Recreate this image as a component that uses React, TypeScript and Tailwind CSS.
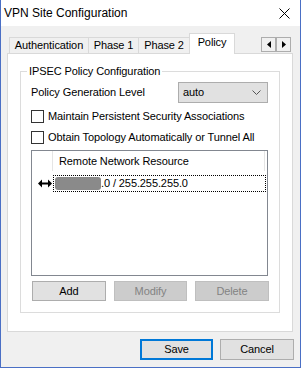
import React from 'react';

const tabs = [
  { label: 'Authentication', w: 'w-[80px]' },
  { label: 'Phase 1', w: 'w-[51px]' },
  { label: 'Phase 2', w: 'w-[52px]' },
];

const Checkbox: React.FC<{ label: string; className?: string }> = ({ label, className }) => (
  <div className={`flex items-center h-[13px] ${className ?? ''}`}>
    <div className="w-[13px] h-[13px] border border-[#333333] bg-white" />
    <span className="ml-[4px] leading-[13px]">{label}</span>
  </div>
);

const Button: React.FC<{ label: string; w: string; disabled?: boolean; focused?: boolean; h?: string }> = ({
  label,
  w,
  disabled,
  focused,
  h = 'h-[20px]',
}) => (
  <div
    className={`${w} ${h} flex items-center justify-center ${
      focused
        ? 'border-2 border-[#0078d7] bg-[#e1e1e1]'
        : disabled
        ? 'border border-[#bfbfbf] bg-[#cccccc] text-[#838383]'
        : 'border border-[#adadad] bg-[#e1e1e1]'
    }`}
  >
    {label}
  </div>
);

const App: React.FC = () => {
  return (
    <div
      className="w-[301px] h-[368px] bg-[#f0f0f0] border-x border-b border-[#4a6fc5] flex flex-col text-[11px] tracking-[-0.1px] text-black overflow-hidden"
      style={{ fontFamily: '"Liberation Sans", Arial, sans-serif' }}
    >
      {/* title bar */}
      <div className="h-[26px] bg-white flex items-center justify-between pl-[3px] pr-[10px]">
        <span className="text-[12px] tracking-normal leading-none">VPN Site Configuration</span>
        <svg width="11" height="11" viewBox="0 0 11 11">
          <path d="M0.5 0.5 L10.5 10.5 M10.5 0.5 L0.5 10.5" stroke="#000" strokeWidth="1" />
        </svg>
      </div>

      {/* tab strip */}
      <div className="mt-[7px] h-[20px] flex items-end pl-[8px] pr-[9px]">
        {tabs.map((t, i) => (
          <div
            key={t.label}
            className={`${t.w} h-[16px] border-t border-l ${i === 0 ? '' : '-ml-px'} border-r border-[#d9d9d9] bg-[#f0f0f0] flex items-center justify-center leading-none`}
          >
            {t.label}
          </div>
        ))}
        <div className="-ml-px w-[46px] h-[21px] -mb-px relative z-10 bg-white border-t border-x border-[#d9d9d9] flex items-start justify-center pt-[3px] leading-none">
          Policy
        </div>
        <div className="ml-auto self-start mt-[4px] flex">
          <div className="w-[15px] h-[15px] border border-[#adadad] bg-[#f0f0f0] flex items-center justify-center">
            <svg width="4" height="7" viewBox="0 0 4 7">
              <path d="M4 0 L0 3.5 L4 7 Z" fill="#000" />
            </svg>
          </div>
          <div className="w-[15px] h-[15px] border border-[#adadad] bg-[#f0f0f0] flex items-center justify-center">
            <svg width="4" height="7" viewBox="0 0 4 7">
              <path d="M0 0 L4 3.5 L0 7 Z" fill="#000" />
            </svg>
          </div>
        </div>
      </div>

      {/* tab page */}
      <div className="ml-[6px] w-[286px] h-[279px] bg-white border border-[#d9d9d9] pt-[17px] pl-[12px]">
        {/* group box */}
        <div className="relative w-[260px] h-[242px] border border-[#dcdcdc]">
          <span className="absolute -top-[7px] left-[6px] bg-white px-[2px] leading-[13px]">
            IPSEC Policy Configuration
          </span>
          <div className="pl-[10px] pt-[10px] flex flex-col">
            <div className="flex items-center h-[21px]">
              <span className="w-[147px]">Policy Generation Level</span>
              <div className="w-[90px] h-[21px] border border-[#adadad] bg-[#e1e1e1] flex items-center justify-between pl-[4px] pr-[6px]">
                <span>auto</span>
                <svg width="9" height="5" viewBox="0 0 9 5">
                  <path d="M0.5 0.5 L4.5 4.5 L8.5 0.5" stroke="#555" strokeWidth="1" fill="none" />
                </svg>
              </div>
            </div>
            <Checkbox label="Maintain Persistent Security Associations" className="mt-[7px]" />
            <Checkbox label="Obtain Topology Automatically or Tunnel All" className="mt-[8px]" />

            {/* list view */}
            <div className="mt-[6px] w-[237px] h-[126px] border border-[#828790] bg-white">
              <div className="flex h-[20px]">
                <div className="w-[21px] border-r border-[#e5e5e5]" />
                <div className="w-[212px] border-r border-[#e5e5e5] pl-[6px] flex items-center">
                  Remote Network Resource
                </div>
              </div>
              <div className="mt-[4px] flex items-center h-[17px]">
                <div className="w-[21px] flex justify-end pr-[1px]">
                  <svg width="14" height="9" viewBox="0 0 14 9">
                    <path d="M0 4.5 L4 0.5 L4 3.5 L10 3.5 L10 0.5 L14 4.5 L10 8.5 L10 5.5 L4 5.5 L4 8.5 Z" fill="#000" />
                  </svg>
                </div>
                <div className="w-[213px] h-[17px] border border-dotted border-black flex items-center pl-[1px]">
                  <div className="w-[46px] h-[13px] bg-[#8a8a8a] rounded-[3px] blur-[0.6px]" />
                  <span>.0 / 255.255.255.0</span>
                </div>
              </div>
            </div>

            <div className="mt-[5px] ml-[1px] flex gap-[8px]">
              <Button label="Add" w="w-[74px]" />
              <Button label="Modify" w="w-[73px]" disabled />
              <Button label="Delete" w="w-[74px]" disabled />
            </div>
          </div>
        </div>
      </div>

      {/* footer */}
      <div className="mt-[7px] flex justify-end gap-[7px] pr-[6px]">
        <Button label="Save" w="w-[73px]" h="h-[21px]" focused />
        <Button label="Cancel" w="w-[74px]" h="h-[21px]" />
      </div>
    </div>
  );
};

export default App;
